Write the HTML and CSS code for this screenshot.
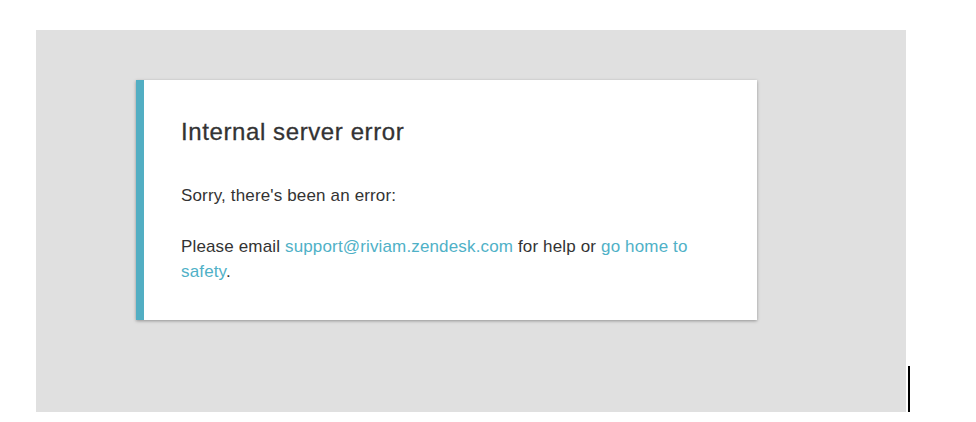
FILE: index.html
```html
<!DOCTYPE html>
<html lang="en">
<head>
    <meta charset="UTF-8">
    <meta name="viewport" content="width=device-width, initial-scale=1.0">
    <title>Internal server error</title>
    <link rel="stylesheet" href="styles.css">
</head>
<body>
    <div class="page">
        <div class="backdrop">
            <div class="error-card">
                <h1>Internal server error</h1>
                <p>Sorry, there's been an error:</p>
                <p>Please email <a href="mailto:support@riviam.zendesk.com">support@riviam.zendesk.com</a> for help or <a href="/">go home to safety</a>.</p>
            </div>
        </div>
        <span class="caret"></span>
    </div>
</body>
</html>
```

FILE: styles.css
```css
body {
    margin: 0;
    font-family: "Liberation Sans", Arial, sans-serif;
    background-color: #fff;
    color: #333;
}
.page {
    display: flex;
    align-items: flex-end;
    padding: 30px 0 0 36px;
}
.backdrop {
    width: 870px;
    height: 382px;
    box-sizing: border-box;
    padding: 50px 0 0 100px;
    background-color: #e0e0e0;
}
.error-card {
    width: 621px;
    height: 240px;
    box-sizing: border-box;
    padding: 37px 37px 0 37px;
    background-color: #fff;
    border-left: 8px solid #52aec3;
    box-shadow: 0 1px 3px rgba(0, 0, 0, 0.35);
}
.error-card h1 {
    margin: 0 0 36px 0;
    font-size: 24px;
    font-weight: normal;
    letter-spacing: 0.6px;
    line-height: 30px;
    color: #333;
    -webkit-text-stroke: 0.3px #333;
}
.error-card p {
    margin: 0 0 26px 0;
    font-size: 17px;
    letter-spacing: 0.15px;
    line-height: 25px;
}
.error-card a {
    color: #4fb1c7;
    text-decoration: none;
}
.caret {
    width: 2px;
    height: 48px;
    margin: 0 0 -2px 2px;
    background-color: #000;
}
```
